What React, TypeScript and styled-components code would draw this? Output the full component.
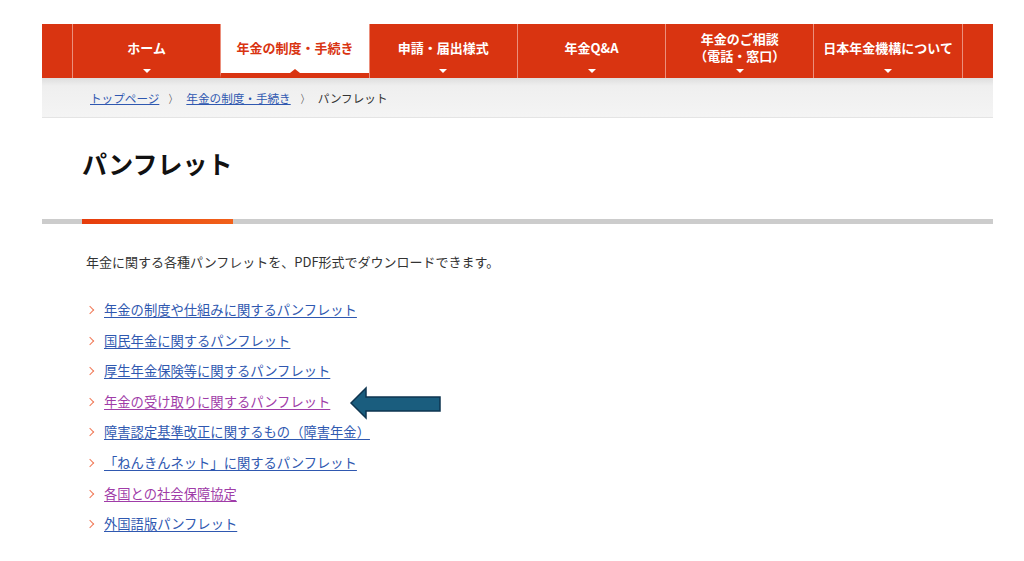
import styled, { createGlobalStyle } from 'styled-components';

const GlobalStyle = createGlobalStyle`
  html, body {
    margin: 0;
    padding: 0;
    background: #fff;
    font-family: "Noto Sans CJK JP", "Noto Sans", sans-serif;
    color: #333;
  }
`;

const Page = styled.div`
  position: relative;
  width: 951px;
  margin-left: 42px;
  padding-top: 24px;
`;

const Nav = styled.nav`
  display: grid;
  grid-template-columns: 30px repeat(6, 148.3px) 1fr;
  height: 54px;
  background: #d93411;
`;

const NavSpacer = styled.div<{ $divider?: boolean }>`
  border-left: ${(p) => (p.$divider ? '1.5px solid #eb8f7c' : 'none')};
`;

const NavItem = styled.div<{ $active?: boolean }>`
  position: relative;
  display: flex;
  flex-direction: column;
  align-items: center;
  justify-content: center;
  padding-bottom: 8px;
  border-left: 1.5px solid #eb8f7c;
  background: ${(p) => (p.$active ? '#fff' : 'transparent')};
  color: ${(p) => (p.$active ? '#d93411' : '#fff')};
  font-size: 13px;
  font-weight: 700;
  line-height: 17px;
  text-align: center;
  box-sizing: border-box;
  ${(p) =>
    p.$active
      ? `
    border-bottom: 5px solid #d93411;
    padding-bottom: 3px;
    &::after {
      content: '';
      position: absolute;
      left: 50%;
      bottom: 0;
      margin-left: -5px;
      border-left: 5px solid transparent;
      border-right: 5px solid transparent;
      border-bottom: 4px solid #d93411;
    }
  `
      : `
    &::after {
      content: '';
      position: absolute;
      left: 50%;
      bottom: 5px;
      margin-left: -4px;
      border-left: 4px solid transparent;
      border-right: 4px solid transparent;
      border-top: 4px solid #fff;
    }
  `}
`;

const Breadcrumb = styled.div`
  display: flex;
  align-items: center;
  gap: 8px;
  height: 39px;
  padding-left: 48px;
  background: linear-gradient(#dedede 0px, #efefef 8px, #f4f4f4 100%);
  border-bottom: 1px solid #e4e4e4;
  font-size: 11.6px;
  color: #333;
`;

const CrumbLink = styled.a`
  color: #2f58b0;
  text-decoration: underline;
`;

const CrumbSep = styled.span`
  font-size: 11px;
  color: #555;
  transform: scaleX(0.7);
`;

const Title = styled.h1`
  margin: 0;
  padding: 27px 0 0 40px;
  font-size: 25px;
  font-weight: 700;
  line-height: 36px;
  color: #111;
`;

const TitleBar = styled.div`
  display: flex;
  margin-top: 38px;
  height: 5px;
  padding-left: 40px;
  background: #cccccc;
`;

const TitleAccent = styled.div`
  width: 151px;
  background: linear-gradient(90deg, #e63c0c, #f1611a);
`;

const Intro = styled.p`
  margin: 28px 0 0 44px;
  font-size: 13px;
  line-height: 20px;
  color: #333;
`;

const LinkList = styled.ul`
  list-style: none;
  margin: 28px 0 0 44px;
  padding: 0;
`;

const LinkItem = styled.li`
  position: relative;
  height: 20px;
  margin-bottom: 10.6px;
  padding-left: 18px;
  font-size: 13.3px;
  line-height: 20px;

  &::before {
    content: '';
    position: absolute;
    left: 1px;
    top: 7px;
    width: 5px;
    height: 5px;
    border-top: 1.2px solid #f07a58;
    border-right: 1.2px solid #f07a58;
    transform: rotate(45deg);
  }
`;

const DocLink = styled.a<{ $visited?: boolean }>`
  color: ${(p) => (p.$visited ? '#a03ca8' : '#2f58b0')};
  text-decoration: underline;
  text-underline-offset: 2px;
`;

const Pointer = styled.svg`
  position: absolute;
  left: 306px;
  top: 386px;
`;

const navItems = [
  { label: ['ホーム'] },
  { label: ['年金の制度・手続き'], active: true },
  { label: ['申請・届出様式'] },
  { label: ['年金Q&A'] },
  { label: ['年金のご相談', '（電話・窓口）'] },
  { label: ['日本年金機構について'] },
];

const links = [
  { text: '年金の制度や仕組みに関するパンフレット' },
  { text: '国民年金に関するパンフレット' },
  { text: '厚生年金保険等に関するパンフレット' },
  { text: '年金の受け取りに関するパンフレット', visited: true },
  { text: '障害認定基準改正に関するもの（障害年金）' },
  { text: '「ねんきんネット」に関するパンフレット' },
  { text: '各国との社会保障協定', visited: true },
  { text: '外国語版パンフレット' },
];

export default function App() {
  return (
    <>
      <GlobalStyle />
      <Page>
        <Nav>
          <NavSpacer />
          {navItems.map((item) => (
            <NavItem key={item.label[0]} $active={item.active}>
              {item.label.map((l) => (
                <span key={l}>{l}</span>
              ))}
            </NavItem>
          ))}
          <NavSpacer $divider />
        </Nav>
        <Breadcrumb>
          <CrumbLink>トップページ</CrumbLink>
          <CrumbSep>〉</CrumbSep>
          <CrumbLink>年金の制度・手続き</CrumbLink>
          <CrumbSep>〉</CrumbSep>
          <span>パンフレット</span>
        </Breadcrumb>
        <Title>パンフレット</Title>
        <TitleBar>
          <TitleAccent />
        </TitleBar>
        <Intro>年金に関する各種パンフレットを、PDF形式でダウンロードできます。</Intro>
        <LinkList>
          {links.map((l) => (
            <LinkItem key={l.text}>
              <DocLink $visited={l.visited}>{l.text}</DocLink>
            </LinkItem>
          ))}
        </LinkList>
        <Pointer width="96" height="34" viewBox="0 0 96 34">
          <polygon
            points="3,17 18,2 18,11 92,11 92,25 18,25 18,32"
            fill="#1a5d7e"
            stroke="#0e3550"
            strokeWidth="1.5"
            strokeLinejoin="miter"
          />
        </Pointer>
      </Page>
    </>
  );
}
